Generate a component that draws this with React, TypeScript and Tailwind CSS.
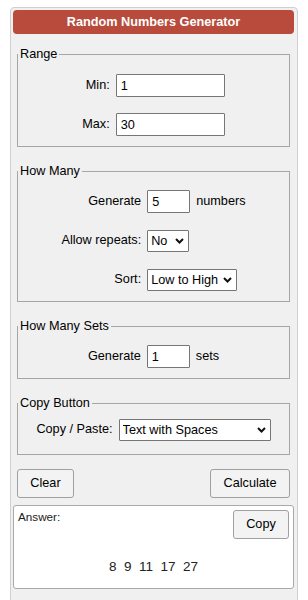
import React from "react";

function Chevron() {
  return (
    <svg width="9" height="6" viewBox="0 0 9 6" className="pointer-events-none absolute right-[5px] top-1/2 -translate-y-1/2">
      <path d="M1 1 L4.5 4.5 L8 1" fill="none" stroke="#111" strokeWidth="2" />
    </svg>
  );
}

function Select({ value, w, className }: { value: string; w: string; className?: string }) {
  return (
    <div className={`relative ${w} ${className ?? ""}`}>
      <select
        defaultValue={value}
        className="appearance-none w-full h-[22px] border border-[#767676] bg-white pl-[3px] pr-[14px] text-[12.7px] leading-[20px] text-black rounded-[1px]"
      >
        <option>{value}</option>
      </select>
      <Chevron />
    </div>
  );
}

function Input({ value, w }: { value: string; w: string }) {
  return (
    <input
      defaultValue={value}
      className={`${w} h-[23px] border border-[#767676] bg-white px-[4px] text-[12.7px] text-black rounded-[1px]`}
    />
  );
}

function Box({ title, className, children }: { title: string; className?: string; children: React.ReactNode }) {
  return (
    <fieldset className={`mx-[4px] w-[273px] border border-[#a6a6a6] ${className ?? ""}`}>
      <legend className="px-[2px] ml-[0px] text-[12.7px] leading-[16px] text-black">{title}</legend>
      {children}
    </fieldset>
  );
}

export default function App() {
  return (
    <div className="min-h-screen bg-white pt-[7px] pl-[10px] font-['Liberation_Sans',Arial,sans-serif] text-[12.7px] text-black">
      <div className="w-[288px] border border-[#cfcfcf] rounded-[4px] bg-[#f0f0f0] px-[2px] pt-[2px] pb-[20px]">
        <div className="h-[24px] w-[281px] rounded-[4px] bg-[#b84b3b] text-white font-bold text-center leading-[24px] text-[12.7px]">
          Random Numbers Generator
        </div>

        <Box title="Range" className="mt-[12px]">
          <div className="pt-[12px] pb-[10px] grid grid-cols-[auto_auto] gap-x-[6px] gap-y-[16px] w-fit mx-auto items-center">
            <span className="text-right">Min:</span>
            <Input value="1" w="w-[109px]" />
            <span className="text-right">Max:</span>
            <Input value="30" w="w-[109px]" />
          </div>
        </Box>

        <Box title="How Many" className="mt-[16px]">
          <div className="pt-[11px] pb-[10px] grid grid-cols-[auto_auto_auto] gap-x-[6px] gap-y-[17px] w-fit mx-auto items-center">
            <span className="text-right">Generate</span>
            <Input value="5" w="w-[43px]" />
            <span>numbers</span>
            <span className="text-right">Allow repeats:</span>
            <Select value="No" w="w-[42px]" className="col-span-2" />
            <span className="text-right">Sort:</span>
            <Select value="Low to High" w="w-[90px]" className="col-span-2" />
          </div>
        </Box>

        <Box title="How Many Sets" className="mt-[16px]">
          <div className="pt-[11px] pb-[10px] flex gap-x-[6px] w-fit mx-auto items-center">
            <span>Generate</span>
            <Input value="1" w="w-[43px]" />
            <span>sets</span>
          </div>
        </Box>

        <Box title="Copy Button" className="mt-[16px]">
          <div className="pt-[8px] pb-[13px] flex gap-x-[6px] w-fit mx-auto items-center">
            <span>Copy / Paste:</span>
            <Select value="Text with Spaces" w="w-[152px]" />
          </div>
        </Box>

        <div className="mx-[4px] w-[273px] mt-[14px] flex justify-between">
          <button className="h-[29px] w-[57px] border border-[#a0a0a0] rounded-[3px] bg-[#f3f3f3] text-[12.7px]">Clear</button>
          <button className="h-[29px] w-[80px] border border-[#a0a0a0] rounded-[3px] bg-[#f3f3f3] text-[12.7px]">Calculate</button>
        </div>

        <div className="mt-[7px] w-[281px] h-[84px] border border-[#a9a9a9] rounded-[3px] bg-white flex flex-col">
          <div className="flex justify-between pl-[4px] pr-[4px] pt-[4px]">
            <span className="text-[11.7px] leading-[14px] text-[#222]">Answer:</span>
            <button className="h-[29px] w-[56px] border border-[#a0a0a0] rounded-[3px] bg-[#f3f3f3] text-[12.7px]">Copy</button>
          </div>
          <div className="mt-[20px] text-center whitespace-pre text-[13.5px] leading-[16px] text-[#222]">8  9  11  17  27</div>
        </div>
      </div>
    </div>
  );
}
